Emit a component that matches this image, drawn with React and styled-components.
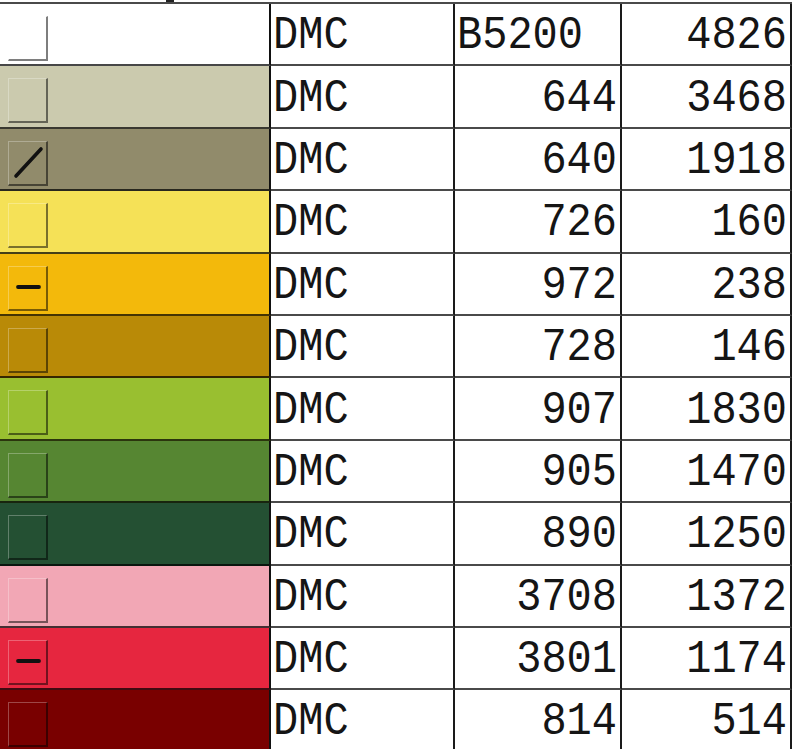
import styled, { createGlobalStyle } from "styled-components";

const GlobalStyle = createGlobalStyle`
  html, body {
    margin: 0;
    padding: 0;
    background: #ffffff;
  }
`;

const rows = [
  { color: "#ffffff", brand: "DMC", code: "B5200", count: 4826, left: true },
  { color: "#cbcaae", brand: "DMC", code: "644", count: 3468 },
  { color: "#918b6b", brand: "DMC", code: "640", count: 1918, mark: "slash" },
  { color: "#f5e157", brand: "DMC", code: "726", count: 160 },
  { color: "#f3b90b", brand: "DMC", code: "972", count: 238, mark: "dash" },
  { color: "#b98a07", brand: "DMC", code: "728", count: 146 },
  { color: "#99bf30", brand: "DMC", code: "907", count: 1830 },
  { color: "#568632", brand: "DMC", code: "905", count: 1470 },
  { color: "#245033", brand: "DMC", code: "890", count: 1250 },
  { color: "#f2a7b5", brand: "DMC", code: "3708", count: 1372 },
  { color: "#e6263f", brand: "DMC", code: "3801", count: 1174, mark: "dash" },
  { color: "#790000", brand: "DMC", code: "814", count: 514 },
];

const Sheet = styled.div`
  position: relative;
  display: grid;
  grid-template-columns: 271px 184px 167px 170px;
  grid-auto-rows: 62.4px;
  margin-top: 2px;
  border-top: 2px solid #4a4a4a;
  width: 792px;
  font-family: "Liberation Mono", "Courier New", monospace;
  color: #151515;
`;

/* bit of the row above that peeks over the top edge */
const Peek = styled.span`
  position: absolute;
  top: -4px;
  left: 166px;
  width: 8px;
  height: 2px;
  background: #222;
`;

const SwatchCell = styled.div`
  box-sizing: border-box;
  background: ${(p) => p.$color};
  border-right: 2px solid #111;
  border-bottom: 2px solid rgba(0, 0, 0, 0.72);
  padding: 12px 0 0 8px;
`;

const Bevel = styled.div`
  box-sizing: border-box;
  width: 40px;
  height: 45px;
  border-top: 1px solid rgba(255, 255, 255, 0.28);
  border-left: 1px solid rgba(255, 255, 255, 0.28);
  border-right: 2px solid rgba(0, 0, 0, 0.5);
  border-bottom: 2px solid rgba(0, 0, 0, 0.5);
  display: flex;
  align-items: center;
  justify-content: center;
`;

const TextCell = styled.div`
  box-sizing: border-box;
  border-right: 2px solid #1a1a1a;
  border-bottom: 2px solid #4a4a4a;
  display: flex;
  align-items: center;
  justify-content: ${(p) => (p.$right ? "flex-end" : "flex-start")};
  padding: 4px ${(p) => (p.$right ? "3px" : "0")} 0 ${(p) => (p.$right ? "0" : "2px")};
  font-size: 42px;
  line-height: 1;
  white-space: nowrap;
`;

const Glyph = styled.span`
  display: inline-block;
  transform: scaleY(1.12);
`;

const Mark = ({ kind }) => {
  if (kind === "slash") {
    return (
      <svg width="36" height="41" viewBox="0 0 36 41">
        <line x1="6" y1="34" x2="31" y2="7" stroke="#111" strokeWidth="3.6" strokeLinecap="round" />
      </svg>
    );
  }
  if (kind === "dash") {
    return (
      <svg width="36" height="41" viewBox="0 0 36 41">
        <line x1="8" y1="20" x2="29" y2="20" stroke="#111" strokeWidth="3.8" strokeLinecap="round" />
      </svg>
    );
  }
  return null;
};

const App = () => {
  return (
    <>
      <GlobalStyle />
      <Sheet>
        <Peek />
        {rows.map((r, i) => [
          <SwatchCell key={`s${i}`} $color={r.color}>
            <Bevel>
              <Mark kind={r.mark} />
            </Bevel>
          </SwatchCell>,
          <TextCell key={`b${i}`}>
            <Glyph>{r.brand}</Glyph>
          </TextCell>,
          <TextCell key={`c${i}`} $right={!r.left}>
            <Glyph>{r.code}</Glyph>
          </TextCell>,
          <TextCell key={`n${i}`} $right>
            <Glyph>{r.count}</Glyph>
          </TextCell>,
        ])}
      </Sheet>
    </>
  );
};

export default App;
